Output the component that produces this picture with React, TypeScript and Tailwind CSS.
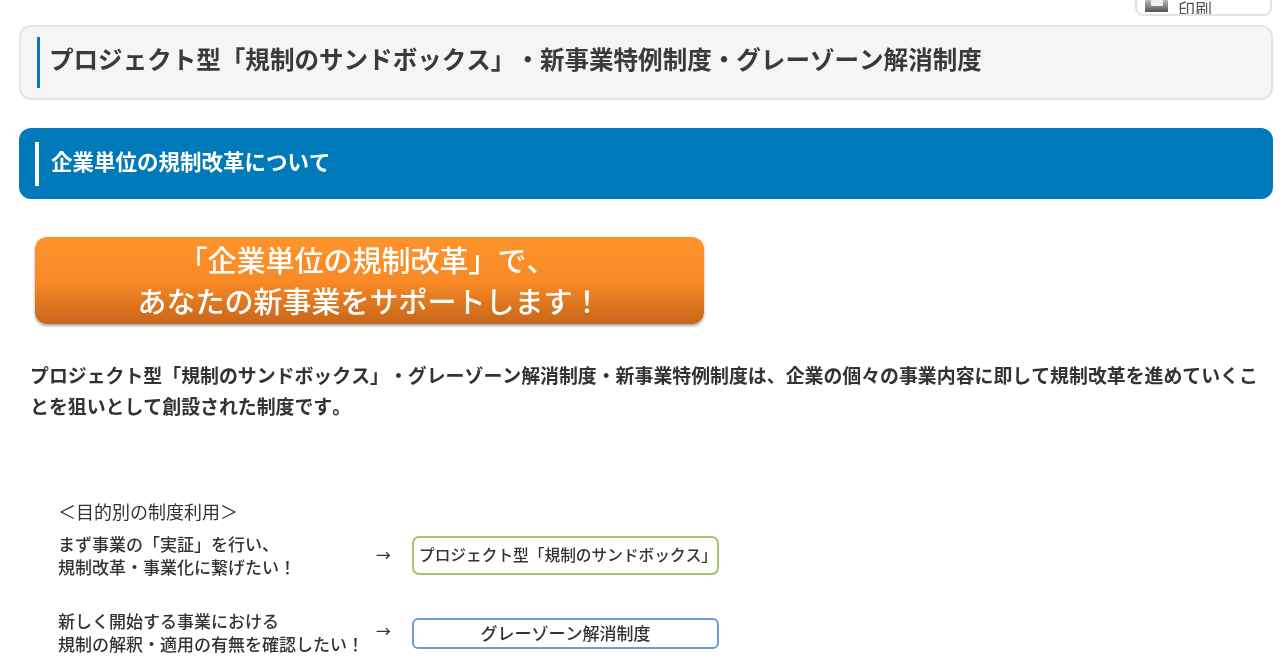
const font = "font-['Noto_Sans_CJK_JP','Liberation_Sans',sans-serif] [text-spacing-trim:space-all] [font-kerning:none]";

const App = () => {
  return (
    <div className={`w-[1280px] h-[670px] overflow-hidden bg-white text-[#333] blur-[0.5px] ${font}`}>
      {/* Print button, cut off at the top */}
      <div className="h-[25px] flex justify-end pr-[8px]">
        <div className="w-[137px] h-[16px] overflow-hidden border-2 border-t-0 border-[#e4e4e4] rounded-b-[8px] flex items-end pl-[8px] gap-[10px]">
          <div className="w-[23px] h-[12px] mb-[2px] bg-gradient-to-b from-[#bbb] to-[#555] flex justify-center">
            <div className="w-[12px] h-[6px] bg-[#eee]" />
          </div>
          <span className="text-[17px] leading-[17px] text-[#555] h-[14px]">印刷</span>
        </div>
      </div>

      {/* Page title */}
      <div className="ml-[19px] mr-[7px] h-[75px] bg-[#f5f5f5] border-2 border-[#e4e4e4] rounded-[12px] pl-[16px] pt-[10px]">
        <h1 className="h-[51px] border-l-[3px] border-[#0e76b8] pl-[9px] text-[24.55px] leading-[44px] font-bold text-[#3a3a3a] whitespace-nowrap">
          プロジェクト型「規制のサンドボックス」・新事業特例制度・グレーゾーン解消制度
        </h1>
      </div>

      {/* Section heading */}
      <div className="mt-[28px] ml-[19px] mr-[7px] h-[71px] bg-[#007ab8] rounded-[12px] pl-[16px] pt-[14px]">
        <h2 className="h-[44px] border-l-[4px] border-white pl-[12px] text-[21.5px] leading-[38px] font-bold text-white whitespace-nowrap">
          企業単位の規制改革について
        </h2>
      </div>

      {/* Orange banner */}
      <div className="mt-[38px] ml-[35px] w-[669px] h-[87px] pt-[2px] rounded-[12px] bg-gradient-to-b from-[#ff932b] via-[#f98a26] to-[#c8661a] shadow-[0_2px_3px_rgba(0,0,0,0.35)] flex flex-col items-center text-[29px] leading-[41px] font-medium text-white">
        <span className="pr-[5px]">「企業単位の規制改革」で、</span>
        <span>あなたの新事業をサポートします！</span>
      </div>

      {/* Description */}
      <p className="mt-[35px] ml-[30px] w-[1232px] text-[18.9px] leading-[31px] font-bold text-[#333]">
        プロジェクト型「規制のサンドボックス」・グレーゾーン解消制度・新事業特例制度は、企業の個々の事業内容に即して規制改革を進めていくことを狙いとして創設された制度です。
      </p>

      {/* Purpose chart */}
      <div className="mt-[78px] ml-[58px] text-[17px] font-medium text-[#333]">
        <div className="leading-[24px] h-[24px] text-[18px] font-normal">＜目的別の制度利用＞</div>

        <div className="mt-[8px] flex items-center h-[48px]">
          <div className="w-[316px] leading-[23px] whitespace-nowrap">
            <div>まず事業の「実証」を行い、</div>
            <div>規制改革・事業化に繋げたい！</div>
          </div>
          <span className="w-[38px] text-[15px] pl-[2px]">→</span>
          <div className="w-[307px] h-[39px] pl-[5px] border-2 border-[#a4c56c] rounded-[7px] flex items-center justify-center text-[15.7px] whitespace-nowrap">
            プロジェクト型「規制のサンドボックス」
          </div>
        </div>

        <div className="mt-[29px] flex items-center h-[48px]">
          <div className="w-[316px] leading-[23px] whitespace-nowrap">
            <div>新しく開始する事業における</div>
            <div>規制の解釈・適用の有無を確認したい！</div>
          </div>
          <span className="w-[38px] text-[15px] pl-[2px] -mt-[1px]">→</span>
          <div className="w-[307px] h-[31px] mt-[2px] border-2 border-[#6f9fd1] rounded-[6px] flex items-center justify-center">
            グレーゾーン解消制度
          </div>
        </div>
      </div>
    </div>
  );
};

export default App;
